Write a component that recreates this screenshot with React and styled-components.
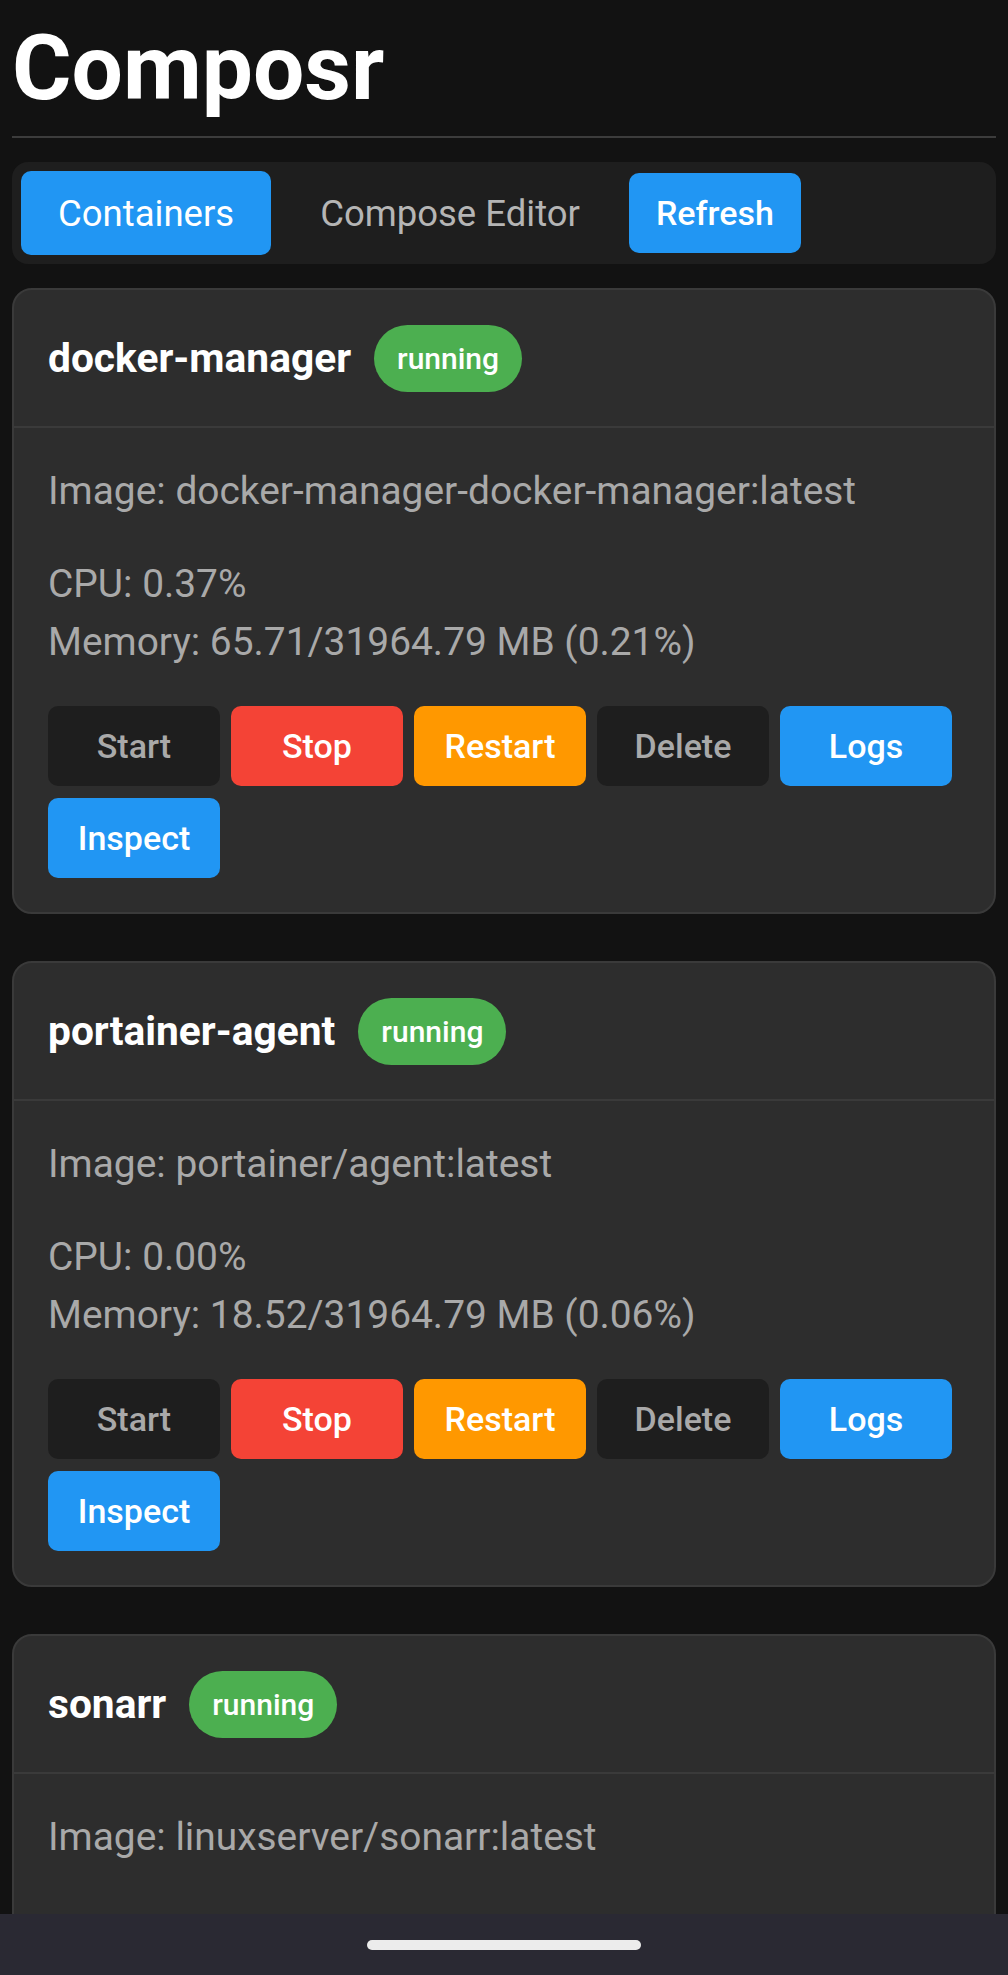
import React from "react";
import styled, { createGlobalStyle } from "styled-components";

const GlobalStyle = createGlobalStyle`
  body {
    margin: 0;
    background: #121212;
    font-family: Roboto, "Noto Sans", "Liberation Sans", sans-serif;
    color: #fff;
  }
`;

const Page = styled.div`
  padding: 13px 12px 80px;
`;

const Title = styled.h1`
  margin: 0;
  font-size: 91px;
  font-weight: 700;
  line-height: 110px;
  padding-bottom: 13px;
  border-bottom: 2px solid #3c3c3c;
  color: #fff;
`;

const TabBar = styled.nav`
  display: flex;
  align-items: center;
  gap: 12px;
  margin: 24px 0;
  padding: 9px;
  background: #1e1e1e;
  border-radius: 16px;
`;

const Tab = styled.button`
  height: 84px;
  padding: 0 37px;
  border: none;
  border-radius: 10px;
  font-family: inherit;
  font-size: 36.5px;
  font-weight: 400;
  background: ${(p) => (p.$active ? "#2196f3" : "transparent")};
  color: ${(p) => (p.$active ? "#fff" : "#b5b5b5")};
`;

const ActionButton = styled.button`
  min-width: 172px;
  height: 80px;
  padding: 0 24px;
  border: none;
  border-radius: 10px;
  font-family: inherit;
  font-size: 34px;
  font-weight: 500;
  background: ${(p) => p.$bg};
  color: ${(p) => p.$color || "#fff"};
`;

const Card = styled.section`
  background: #2d2d2d;
  border: 2px solid #3a3a3a;
  border-radius: 20px;
  margin-bottom: 47px;
`;

const CardHeader = styled.header`
  display: flex;
  align-items: center;
  height: 136px;
  padding: 0 34px;
  border-bottom: 2px solid #3a3a3a;
`;

const Name = styled.h2`
  margin: 0;
  font-size: 40.7px;
  font-weight: 700;
  color: #fff;
`;

const Badge = styled.span`
  display: inline-flex;
  align-items: center;
  height: 67px;
  margin-left: 23px;
  padding: 0 23px;
  border-radius: 34px;
  background: #4caf50;
  color: #fff;
  font-size: 30px;
  font-weight: 500;
`;

const CardBody = styled.div`
  padding: 34px;
`;

const Info = styled.div`
  margin-bottom: 35px;
  font-size: 38.9px;
  line-height: 58px;
  color: #a9a9a9;
`;

const Actions = styled.div`
  display: flex;
  flex-wrap: wrap;
  gap: 12px 11px;
`;

const HomeBar = styled.div`
  position: fixed;
  left: 0;
  right: 0;
  bottom: 0;
  height: 61px;
  display: flex;
  align-items: center;
  justify-content: center;
  background: #2a2933;
`;

const HomePill = styled.div`
  width: 274px;
  height: 10px;
  border-radius: 5px;
  background: #ececec;
`;

const containers = [
  {
    name: "docker-manager",
    image: "docker-manager-docker-manager:latest",
    cpu: "0.37%",
    memory: "65.71/31964.79 MB (0.21%)",
  },
  {
    name: "portainer-agent",
    image: "portainer/agent:latest",
    cpu: "0.00%",
    memory: "18.52/31964.79 MB (0.06%)",
  },
  {
    name: "sonarr",
    image: "linuxserver/sonarr:latest",
    cpu: "0.02%",
    memory: "212.40/31964.79 MB (0.66%)",
  },
];

const actions = [
  { label: "Start", bg: "#1e1e1e", color: "#a9a9a9" },
  { label: "Stop", bg: "#f44336" },
  { label: "Restart", bg: "#ff9800" },
  { label: "Delete", bg: "#1e1e1e", color: "#a9a9a9" },
  { label: "Logs", bg: "#2196f3" },
  { label: "Inspect", bg: "#2196f3" },
];

const ContainerCard = ({ c }) => (
  <Card>
    <CardHeader>
      <Name>{c.name}</Name>
      <Badge>running</Badge>
    </CardHeader>
    <CardBody>
      <Info>Image: {c.image}</Info>
      <Info>
        <div>CPU: {c.cpu}</div>
        <div>Memory: {c.memory}</div>
      </Info>
      <Actions>
        {actions.map((a) => (
          <ActionButton key={a.label} $bg={a.bg} $color={a.color}>
            {a.label}
          </ActionButton>
        ))}
      </Actions>
    </CardBody>
  </Card>
);

export default function App() {
  return (
    <>
      <GlobalStyle />
      <Page>
        <Title>Composr</Title>
        <TabBar>
          <Tab $active>Containers</Tab>
          <Tab>Compose Editor</Tab>
          <ActionButton $bg="#2196f3">Refresh</ActionButton>
        </TabBar>
        {containers.map((c) => (
          <ContainerCard key={c.name} c={c} />
        ))}
      </Page>
      <HomeBar>
        <HomePill />
      </HomeBar>
    </>
  );
}
